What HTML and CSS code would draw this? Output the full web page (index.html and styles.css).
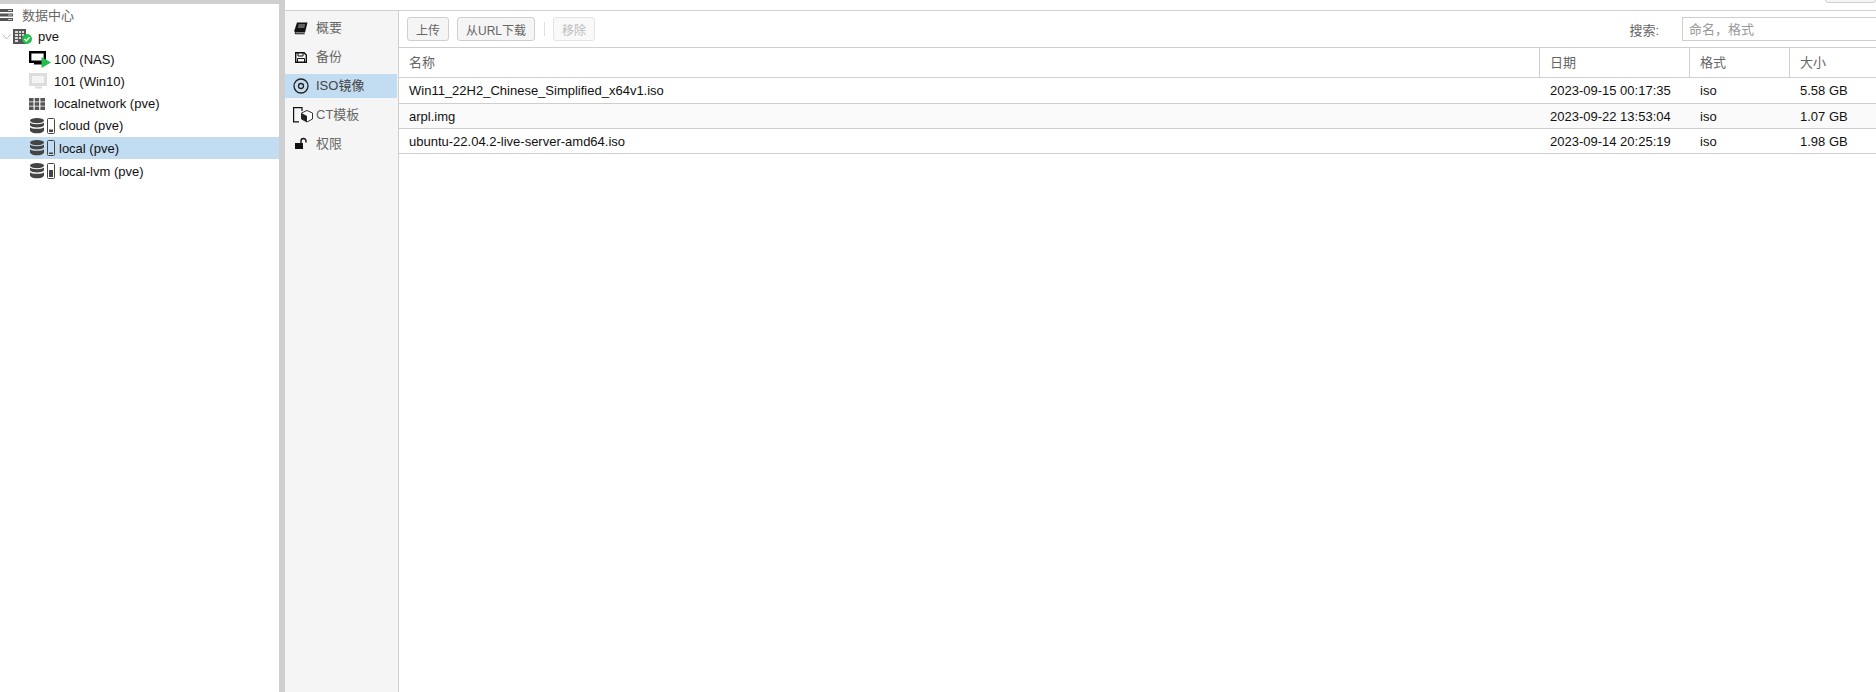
FILE: index.html
```html
<!DOCTYPE html>
<html lang="zh">
<head>
<meta charset="utf-8">
<title>local (pve)</title>
<link rel="stylesheet" href="styles.css">
</head>
<body>
<div class="app">
  <aside class="tree-panel">
    <div class="tree-row r-dc">
      <svg class="ic" viewBox="0 0 13 12" width="13" height="12"><path d="M0 0h13v3H0zM0 4.500h13v3H0zM0 9h13v3H0z" fill="#555"/><path d="M8 1.500h4M8 6h4M8 10.500h4" stroke="#ccc" stroke-width="1"/></svg>
      <span class="t-muted">数据中心</span>
    </div>
    <div class="tree-row r-pve">
      <svg class="caret" viewBox="0 0 9 6" width="9" height="6"><path d="M.5.500 4.500 5 8.500.500" fill="none" stroke="#bbb"/></svg>
      <svg class="ic" viewBox="0 0 19 15" width="19" height="15"><path d="M0 0h13v15H0z" fill="#555"/><path d="M2 2h3v2H2zM6 2h2v2H6zM9 2h2v2H9zM2 5h3v2H2zM6 5h2v2H6zM9 5h2v2H9zM2 8h3v2H2zM6 8h2v2H6zM2 11h3v2H2z" fill="#ddd"/><circle cx="14" cy="10" r="5" fill="#21bf4b"/><path d="M11.500 10l1.800 1.900L16.500 8.300" fill="none" stroke="#fff" stroke-width="1.400"/></svg>
      <span>pve</span>
    </div>
    <div class="tree-row r-vm">
      <svg class="ic" viewBox="0 0 22 17" width="22" height="17"><path d="M1.200 1.200h14.600v9.600H1.200z" fill="#fff" stroke="#000" stroke-width="2.400"/><path d="M5 11.500h8v2H5z" fill="#000"/><path d="M12.500 6l9.500 5.500-9.500 5.500z" fill="#21bf4b"/></svg>
      <span>100 (NAS)</span>
    </div>
    <div class="tree-row r-vm">
      <svg class="ic" viewBox="0 0 22 17" width="22" height="17"><path d="M1.500 1.500h15v10h-15z" fill="#f4f4f4" stroke="#ddd" stroke-width="3"/><path d="M6 13.500h7v2H6z" fill="#ddd"/></svg>
      <span>101 (Win10)</span>
    </div>
    <div class="tree-row r-net">
      <svg class="ic" viewBox="0 0 16 12" width="16" height="12"><path d="M0 0h4.500v3.400H0zM5.700 0h4.500v3.400H5.700zM11.400 0H16v3.400h-4.600zM0 4.300h4.500v3.400H0zM5.700 4.300h4.500v3.400H5.700zM11.400 4.300H16v3.400h-4.600zM0 8.600h4.500V12H0zM5.700 8.600h4.500V12H5.700zM11.400 8.600H16V12h-4.600z" fill="#555"/></svg>
      <span>localnetwork (pve)</span>
    </div>
    <div class="tree-row r-st">
      <svg class="ic" viewBox="0 0 26 16" width="26" height="16"><ellipse cx="8" cy="2.600" rx="7" ry="2.600" fill="#444"/><path d="M1 4.600c1.500 2.200 12.500 2.200 14 0v2.600c-1.500 3-12.500 3-14 0zM1 9.200c1.500 2.200 12.500 2.200 14 0v3.600c-1.500 3.400-12.500 3.400-14 0z" fill="#444"/><rect x="18.500" y=".5" width="7" height="15" rx="1" fill="#fff" stroke="#444"/><path d="M20 11.500h4V14h-4z" fill="#444"/></svg>
      <span>cloud (pve)</span>
    </div>
    <div class="tree-row r-st selected">
      <svg class="ic" viewBox="0 0 26 16" width="26" height="16"><ellipse cx="8" cy="2.600" rx="7" ry="2.600" fill="#444"/><path d="M1 4.600c1.500 2.200 12.500 2.200 14 0v2.600c-1.500 3-12.500 3-14 0zM1 9.200c1.500 2.200 12.500 2.200 14 0v3.600c-1.500 3.400-12.500 3.400-14 0z" fill="#444"/><rect x="18.500" y=".5" width="7" height="15" rx="1" fill="none" stroke="#444"/><path d="M20 12.500h4V14h-4z" fill="#444"/></svg>
      <span>local (pve)</span>
    </div>
    <div class="tree-row r-st r-last">
      <svg class="ic" viewBox="0 0 26 16" width="26" height="16"><ellipse cx="8" cy="2.600" rx="7" ry="2.600" fill="#444"/><path d="M1 4.600c1.500 2.200 12.500 2.200 14 0v2.600c-1.500 3-12.500 3-14 0zM1 9.200c1.500 2.200 12.500 2.200 14 0v3.600c-1.500 3.400-12.500 3.400-14 0z" fill="#444"/><rect x="18.500" y=".5" width="7" height="15" rx="1" fill="#fff" stroke="#444"/><path d="M20 7h4v7h-4z" fill="#444"/></svg>
      <span>local-lvm (pve)</span>
    </div>
  </aside>
  <main class="content">
    <div class="title-bar"><div class="title-btn"></div></div>
    <div class="body">
      <nav class="side">
        <div class="nav-item">
          <svg class="nav-ic" viewBox="0 0 22 18" width="22" height="18"><path d="M4 3.500h10.500L12 13.500H2L1.200 12z" fill="#111"/><path d="M5.500 6h6.500M5 8h6.500" stroke="#ddd" stroke-width=".8"/><path d="M2 13.500l.7 1.200h9" fill="none" stroke="#111" stroke-width="1.100"/></svg>
          <span>概要</span>
        </div>
        <div class="nav-item">
          <svg class="nav-ic" viewBox="0 0 22 18" width="22" height="18"><path d="M2.700 4.700h8.300l2.300 2.300v7.300H2.700z" fill="none" stroke="#111" stroke-width="1.400"/><path d="M5 5v3h5V5" fill="none" stroke="#111"/><path d="M4.500 15v-4.500h7V15" fill="none" stroke="#111"/></svg>
          <span>备份</span>
        </div>
        <div class="nav-item active">
          <svg class="nav-ic" viewBox="0 0 22 18" width="22" height="18"><circle cx="8" cy="9" r="7" fill="none" stroke="#222" stroke-width="1.300"/><circle cx="8" cy="9" r="2.500" fill="none" stroke="#222" stroke-width="1.300"/></svg>
          <span>ISO镜像</span>
        </div>
        <div class="nav-item">
          <svg class="nav-ic" viewBox="0 0 22 18" width="22" height="18"><path d="M9 5V1.600H.6v14.300H6" fill="none" stroke="#111" stroke-width="1.200"/><path d="M14 4.500l5.500 2.500v6l-5.500 3-5.500-3V7z" fill="#fff" stroke="#333"/><path d="M8.500 7l5.500 3v6l-5.500-3z" fill="#222"/></svg>
          <span>CT模板</span>
        </div>
        <div class="nav-item">
          <svg class="nav-ic" viewBox="0 0 22 18" width="22" height="18"><path d="M2 8h8v6H2z" fill="#111"/><path d="M8 8V6a2.500 2.500 0 0 1 5 0v1.500" fill="none" stroke="#111" stroke-width="1.400"/></svg>
          <span>权限</span>
        </div>
      </nav>
      <section class="panel">
        <div class="toolbar">
          <button class="btn">上传</button>
          <button class="btn btn-url">从URL下载</button>
          <div class="sep"></div>
          <button class="btn disabled">移除</button>
          <div class="spacer"></div>
          <label class="search-label">搜索:</label>
          <div class="search">命名，格式</div>
        </div>
        <div class="grid-head">
          <div class="c-name">名称</div>
          <div class="c-date">日期</div>
          <div class="c-fmt">格式</div>
          <div class="c-size">大小</div>
        </div>
        <div class="grid-row r1">
          <div class="c-name">Win11_22H2_Chinese_Simplified_x64v1.iso</div>
          <div class="c-date">2023-09-15 00:17:35</div>
          <div class="c-fmt">iso</div>
          <div class="c-size">5.58 GB</div>
        </div>
        <div class="grid-row alt">
          <div class="c-name">arpl.img</div>
          <div class="c-date">2023-09-22 13:53:04</div>
          <div class="c-fmt">iso</div>
          <div class="c-size">1.07 GB</div>
        </div>
        <div class="grid-row">
          <div class="c-name">ubuntu-22.04.2-live-server-amd64.iso</div>
          <div class="c-date">2023-09-14 20:25:19</div>
          <div class="c-fmt">iso</div>
          <div class="c-size">1.98 GB</div>
        </div>
      </section>
    </div>
  </main>
</div>
</body>
</html>
```
FILE: styles.css
```css
* { box-sizing: border-box; }
html, body { margin: 0; height: 100%; overflow: hidden; background: #fff; }
body { font: 13px "Liberation Sans", "Noto Sans CJK SC", sans-serif; color: #000; }
.app { display: flex; height: 692px; }

.tree-panel { width: 285px; flex: none; background: #fff; border-top: 4px solid #cfcfcf; border-right: 6px solid #cfcfcf; }
.tree-row { display: flex; align-items: center; height: 22.300px; white-space: nowrap; color: #111; }
.tree-row .ic { flex: none; }
.r-dc { height: 21.500px; }
.t-muted { color: #666; margin-left: 9px; }
.r-pve .caret { margin-left: 2px; flex: none; }
.r-pve .ic { margin-left: 2px; }
.r-pve span { margin-left: 6px; }
.r-vm { padding: 1px 0 0 29px; }
.r-vm span { margin-left: 3px; }
.r-net { padding-left: 29px; }
.r-net span { margin-left: 9px; }
.r-st { padding-left: 29px; }
.r-st span { margin-left: 4px; }
.r-last { padding-top: 2px; }
.selected { background: #c2dcf2; }

.content { flex: 1; min-width: 0; display: flex; flex-direction: column; }
.title-bar { height: 11px; flex: none; border-bottom: 1px solid #cfcfcf; position: relative; overflow: hidden; }
.title-btn { position: absolute; right: 0; top: -20px; width: 51px; height: 23px; background: #f5f5f5; border: 1px solid #cfcfcf; border-radius: 3px; }
.body { flex: 1; display: flex; min-height: 0; }

.side { width: 114px; flex: none; background: #f5f5f5; border-right: 1px solid #cfcfcf; padding-top: 5px; }
.nav-item { display: flex; align-items: center; height: 24px; margin-top: 5px; margin-right: 1px; padding-left: 8px; color: #666; }
.nav-item:first-child { margin-top: 0; }
.nav-item span { margin-bottom: 3px; }
.nav-ic { flex: none; margin-right: 1px; }
.active { background: #c2dcf2; color: #444; }

.panel { flex: 1; min-width: 0; display: flex; flex-direction: column; }
.toolbar { height: 37px; flex: none; display: flex; align-items: center; padding-left: 8px; border-bottom: 1px solid #cfcfcf; }
.btn { height: 24px; padding: 0 8px; font: 12px "Liberation Sans", "Noto Sans CJK SC", sans-serif; color: #666; background: #f5f5f5; border: 1px solid #cfcfcf; border-radius: 3px; }
.btn-url { margin-left: 8px; padding: 0 8px; }
.sep { width: 1px; height: 14px; background: #e0e0e0; margin: 0 8px 0 9px; }
.disabled { color: #bbb; background: #f9f9f9; border-color: #e4e4e4; }
.spacer { flex: 1; }
.search-label { color: #666; margin-right: 23px; }
.search { width: 194px; height: 24px; border: 1px solid #cfcfcf; border-right: 0; padding: 0 6px; line-height: 23px; color: #999; }

.grid-head, .grid-row { display: grid; grid-template-columns: 1140px 150px 100px 1fr; }
.grid-head { height: 30px; line-height: 29px; color: #666; border-bottom: 1px solid #cfcfcf; }
.grid-head > div { padding-left: 10px; border-left: 1px solid #cfcfcf; }
.grid-head > .c-name { border-left: 0; }
.grid-row { height: 25px; line-height: 26px; border-bottom: 1px solid #cfcfcf; }
.grid-row.r1 { height: 26px; line-height: 26px; }
.grid-row.alt { background: #fafafa; }
.grid-row > div { padding-left: 11px; color: #111; }
.grid-row > .c-name { padding-left: 10px; }
```
